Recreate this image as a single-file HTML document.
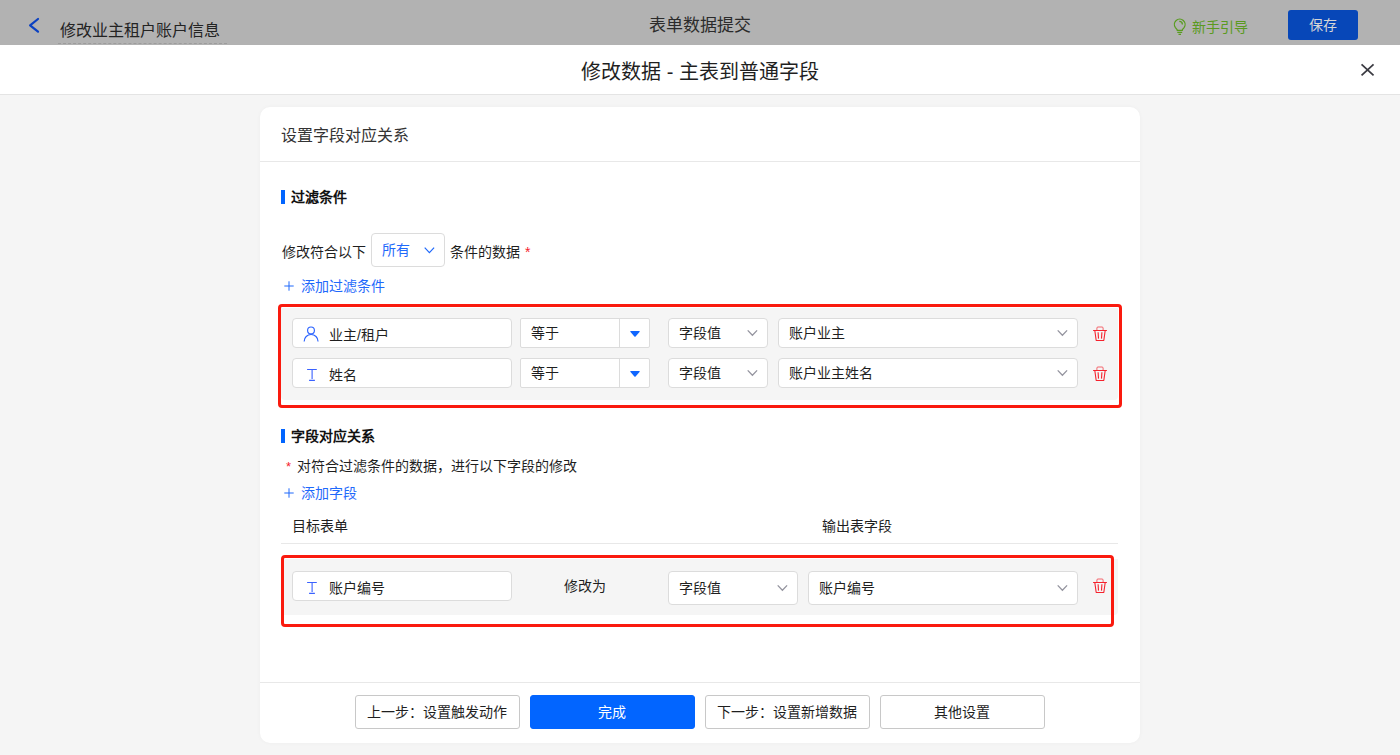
<!DOCTYPE html>
<html lang="zh-CN">
<head>
<meta charset="utf-8">
<title>修改数据 - 主表到普通字段</title>
<style>
*{box-sizing:border-box;margin:0;padding:0}
html,body{width:1400px;height:755px;overflow:hidden}
body{font-family:"Liberation Sans",sans-serif;font-size:14px;color:#1f1f1f;background:#f5f5f5;position:relative}
.abs{position:absolute}
.topbar{position:absolute;left:0;top:0;width:1400px;height:45px;background:#b2b2b2}
.topbar .title{position:absolute;left:58px;top:18px;width:169px;height:26px;line-height:25px;font-size:16px;color:#232323;padding-left:2px;border-bottom:1px dashed #9c9c9c;white-space:nowrap}
.topbar .center{position:absolute;left:600px;top:15px;width:200px;text-align:center;font-size:17px;line-height:22px;color:#2b2b2b}
.topbar .guide{position:absolute;left:1192px;top:17px;font-size:14px;line-height:20px;color:#5a9a20;white-space:nowrap}
.topbar .save{position:absolute;left:1288px;top:10px;width:70px;height:30px;border-radius:3px;background:#0747b8;color:#d6d6d6;font-size:14px;line-height:30px;text-align:center}
.mhead{position:absolute;left:0;top:45px;width:1400px;height:50px;background:#fff;border-bottom:1px solid #e4e4e4}
.mhead .t{position:absolute;left:0;top:0;width:1400px;text-align:center;font-size:20px;line-height:54px;color:#1f1f1f;white-space:nowrap}
.card{position:absolute;left:260px;top:107px;width:880px;height:636px;background:#fff;border-radius:10px;box-shadow:0 0 4px rgba(0,0,0,0.035)}
.card .ch{position:absolute;left:21px;top:18px;font-size:16px;line-height:22px;color:#333;white-space:nowrap}
.hr{position:absolute;height:1px;background:#e8e8e8}
.sec{position:absolute;left:21px;font-weight:bold;font-size:14px;line-height:14px;padding-left:6px;border-left:4px solid #0265ff;color:#111;white-space:nowrap}
.txt{position:absolute;font-size:14px;line-height:20px;white-space:nowrap;color:#1f1f1f}
.link{color:#1f69fb}
.red{color:#f5222d}
.box{position:absolute;background:#fff;border:1px solid #dcdcdc;border-radius:4px;font-size:14px;color:#1f1f1f;white-space:nowrap}
.box .v{position:absolute;left:10px;top:0}
.box.sq{border-radius:2px}
.redbox{position:absolute;border:3px solid #fa1a0e;border-radius:4px;z-index:2}
.graybg{position:absolute;background:#f5f5f5;border-radius:0 0 4px 4px}
.btn{position:absolute;top:588px;width:165px;height:34px;border:1px solid #c8c8c8;border-radius:3px;background:#fff;font-size:14px;line-height:32px;text-align:center;color:#1f1f1f;white-space:nowrap;padding-right:2px}
.btn.pri{background:#0265ff;border-color:#0265ff;color:#fff}
svg{position:absolute;overflow:visible}
</style>
</head>
<body>
<!-- dimmed top bar -->
<div class="topbar">
  <svg style="left:28px;top:17px" width="12" height="17" viewBox="0 0 12 17"><path d="M10 2 L2.1 8.35 L10 14.7" fill="none" stroke="#0b41c2" stroke-width="2.2" stroke-linecap="round" stroke-linejoin="round"/></svg>
  <div class="title">修改业主租户账户信息</div>
  <div class="center">表单数据提交</div>
  <svg style="left:1173px;top:18px" width="14" height="18" viewBox="0 0 14 18"><path d="M2.42 9.6 A5.35 5.35 0 1 1 11.06 9.6 L9.38 11.6 V12.3 H4.1 V11.6 Z M4.3 14.4 H9.2 M5.5 16.4 H8 M6.3 3.4 A3.1 3.1 0 0 1 9.4 6.5" fill="none" stroke="#589c1e" stroke-width="1.25" stroke-linejoin="round"/></svg>
  <div class="guide">新手引导</div>
  <div class="save">保存</div>
</div>

<!-- modal header -->
<div class="mhead">
  <div class="t">修改数据 - 主表到普通字段</div>
  <svg style="left:1361px;top:18px" width="14" height="14" viewBox="0 0 14 14"><path d="M0.55 1.35 L12.55 12.35 M12.55 1.35 L0.55 12.35" fill="none" stroke="#3b3b42" stroke-width="1.75"/></svg>
</div>

<!-- icon sprite -->
<svg width="0" height="0" style="left:0;top:0">
  <defs>
    <symbol id="i-user" viewBox="0 0 17 18"><circle cx="8" cy="5.4" r="3.4" fill="none" stroke="#2a62ff" stroke-width="1.15"/><path d="M1.15 16.4 A6.95 6.95 0 0 1 15.05 16.4" fill="none" stroke="#2a62ff" stroke-width="1.15"/></symbol>
    <symbol id="i-text" viewBox="0 0 12 14"><path d="M1.1 1.5 H10.8 M6.1 1.5 V11.1 M3.1 12.4 H8.9" fill="none" stroke="#3a62ff" stroke-width="1.1"/></symbol>
    <symbol id="i-chev" viewBox="0 0 11 7"><path d="M0.7 0.4 L5.4 5.3 L10.1 0.4" fill="none" stroke="#94949f" stroke-width="1.25"/></symbol>
    <symbol id="i-chevb" viewBox="0 0 11 7"><path d="M0.7 0.7 L5.4 5.6 L10.1 0.7" fill="none" stroke="#1f69fb" stroke-width="1.2"/></symbol>
    <symbol id="i-tri" viewBox="0 0 10 6"><path d="M0.6 0 H9.4 Q10 0.3 9.5 0.9 L5.6 5.5 Q5 6 4.4 5.5 L0.5 0.9 Q0 0.3 0.6 0 Z" fill="#0f66ff"/></symbol>
    <symbol id="i-trash" viewBox="0 0 16 16"><path d="M1.1 4.5 H14.9 M2.8 4.5 L4.2 14.5 H11.8 L13.2 4.5 M6.1 6.2 L6.5 12.6 M9.9 6.2 L9.5 12.6" fill="none" stroke="#f5222d" stroke-width="1.1" stroke-linejoin="round"/><path d="M4.9 4.5 V2 a1 1 0 0 1 1-1 h4.2 a1 1 0 0 1 1 1 V4.5" fill="none" stroke="#f5222d" stroke-width="0.9" opacity="0.75"/></symbol>
    <symbol id="i-plus" viewBox="0 0 10 10"><path d="M5 0.3 V9.7 M0.3 5 H9.7" fill="none" stroke="#1f69fb" stroke-width="1"/></symbol>
  </defs>
</svg>

<!-- card -->
<div class="card">
  <div class="ch">设置字段对应关系</div>
  <div class="hr" style="left:0;top:54px;width:880px"></div>

  <div class="sec" style="top:83px">过滤条件</div>

  <div class="txt" style="left:22px;top:135px">修改符合以下</div>
  <div class="box" style="left:111px;top:126px;width:74px;height:34px;line-height:32px"><span class="v link">所有</span>
    <svg style="left:52.3px;top:12.5px" width="11" height="7"><use href="#i-chevb"/></svg>
  </div>
  <div class="txt" style="left:190px;top:135px">条件的数据 <span class="red" style="margin-left:1px">*</span></div>

  <svg style="left:24px;top:174px" width="10" height="10"><use href="#i-plus"/></svg>
  <div class="txt link" style="left:41px;top:169px">添加过滤条件</div>

  <!-- filter rows -->
  <div class="redbox" style="left:18px;top:197px;width:844px;height:104px"></div>
  <div class="graybg" style="left:21px;top:201px;width:837px;height:92px"></div>

  <div class="box" style="left:32px;top:211px;width:220px;height:30px;line-height:33px"><span class="v" style="left:36px">业主/租户</span></div>
  <svg style="left:43px;top:218px" width="17" height="18"><use href="#i-user"/></svg>
  <div class="box sq" style="left:260px;top:211px;width:130px;height:30px;line-height:28px"><span class="v">等于</span><i class="abs" style="left:98px;top:0;width:1px;height:28px;background:#dcdcdc"></i></div>
  <svg style="left:369.5px;top:223.6px" width="10" height="6"><use href="#i-tri"/></svg>
  <div class="box" style="left:408px;top:211px;width:100px;height:30px;line-height:28px"><span class="v">字段值</span></div>
  <svg style="left:486.5px;top:222.8px" width="11" height="7"><use href="#i-chev"/></svg>
  <div class="box" style="left:518px;top:211px;width:300px;height:30px;line-height:28px"><span class="v">账户业主</span></div>
  <svg style="left:797px;top:223px" width="11" height="7"><use href="#i-chev"/></svg>
  <svg style="left:832px;top:219px" width="16" height="16"><use href="#i-trash"/></svg>

  <div class="box" style="left:32px;top:251px;width:220px;height:30px;line-height:33px"><span class="v" style="left:36px">姓名</span></div>
  <svg style="left:46px;top:261px" width="12" height="14"><use href="#i-text"/></svg>
  <div class="box sq" style="left:260px;top:251px;width:130px;height:30px;line-height:28px"><span class="v">等于</span><i class="abs" style="left:98px;top:0;width:1px;height:28px;background:#dcdcdc"></i></div>
  <svg style="left:369.5px;top:263.6px" width="10" height="6"><use href="#i-tri"/></svg>
  <div class="box" style="left:408px;top:251px;width:100px;height:30px;line-height:28px"><span class="v">字段值</span></div>
  <svg style="left:486.5px;top:262.8px" width="11" height="7"><use href="#i-chev"/></svg>
  <div class="box" style="left:518px;top:251px;width:300px;height:30px;line-height:28px"><span class="v">账户业主姓名</span></div>
  <svg style="left:797px;top:263px" width="11" height="7"><use href="#i-chev"/></svg>
  <svg style="left:832px;top:259px" width="16" height="16"><use href="#i-trash"/></svg>

  <div class="sec" style="top:322px">字段对应关系</div>
  <div class="txt red" style="left:26px;top:350px;font-size:13px">*</div>
  <div class="txt" style="left:37px;top:349px">对符合过滤条件的数据，进行以下字段的修改</div>
  <svg style="left:24px;top:381px" width="10" height="10"><use href="#i-plus"/></svg>
  <div class="txt link" style="left:41px;top:376px">添加字段</div>

  <div class="txt" style="left:32px;top:409px">目标表单</div>
  <div class="txt" style="left:562px;top:409px">输出表字段</div>
  <div class="hr" style="left:21px;top:436px;width:837px"></div>

  <div class="redbox" style="left:21px;top:448px;width:833px;height:72px"></div>
  <div class="graybg" style="left:21px;top:452px;width:837px;height:56px"></div>

  <div class="box" style="left:32px;top:464px;width:220px;height:30px;line-height:33px"><span class="v" style="left:36px">账户编号</span></div>
  <svg style="left:46px;top:474px" width="12" height="14"><use href="#i-text"/></svg>
  <div class="txt" style="left:304px;top:469px">修改为</div>
  <div class="box" style="left:408px;top:464px;width:130px;height:34px;line-height:32px"><span class="v">字段值</span></div>
  <svg style="left:517px;top:478px" width="11" height="7"><use href="#i-chev"/></svg>
  <div class="box" style="left:548px;top:464px;width:270px;height:34px;line-height:32px"><span class="v">账户编号</span></div>
  <svg style="left:797px;top:478px" width="11" height="7"><use href="#i-chev"/></svg>
  <svg style="left:832px;top:471px" width="16" height="16"><use href="#i-trash"/></svg>

  <div class="hr" style="left:0;top:575px;width:880px"></div>
  <div class="btn" style="left:95px">上一步：设置触发动作</div>
  <div class="btn pri" style="left:270px">完成</div>
  <div class="btn" style="left:445px">下一步：设置新增数据</div>
  <div class="btn" style="left:620px">其他设置</div>
</div>
</body>
</html>
